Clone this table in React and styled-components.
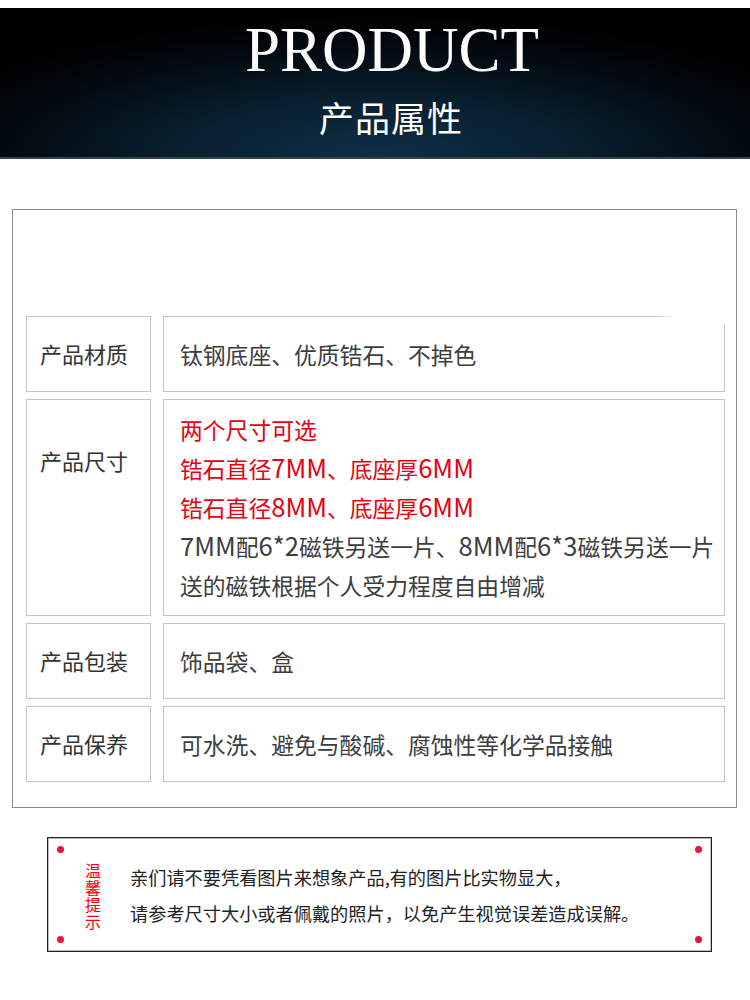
import React from 'react'
import styled, { createGlobalStyle } from 'styled-components';

const rows = [
    { label: '产品材质', lines: [{ text: '钛钢底座、优质锆石、不掉色' }], fade: true },
    {
        label: '产品尺寸',
        top: true,
        lines: [
            { text: '两个尺寸可选', red: true },
            { text: '锆石直径7MM、底座厚6MM', red: true },
            { text: '锆石直径8MM、底座厚6MM', red: true },
            { text: '7MM配6*2磁铁另送一片、8MM配6*3磁铁另送一片' },
            { text: '送的磁铁根据个人受力程度自由增减' },
        ]
    },
    { label: '产品包装', lines: [{ text: '饰品袋、盒' }] },
    { label: '产品保养', lines: [{ text: '可水洗、避免与酸碱、腐蚀性等化学品接触' }] },
];

// latin runs are set a little larger in the original font
const renderText = (text) =>
    text.split(/([A-Za-z0-9*]+)/).map((part, i) =>
        /^[A-Za-z0-9*]+$/.test(part) ? <Latin key={i}>{part}</Latin> : part
    );

function App() {
    return (
        <Page>
            <GlobalStyle />
            <Banner>
                <BannerTitle>PRODUCT</BannerTitle>
                <BannerSub>产品属性</BannerSub>
            </Banner>

            <SpecBox>
                {rows.map((row) => (
                    <SpecRow key={row.label}>
                        <LabelCell $top={row.top}>{row.label}</LabelCell>
                        <ValueCell $fade={row.fade}>
                            {row.lines.map((line) => (
                                <ValueLine key={line.text} $red={line.red}>{renderText(line.text)}</ValueLine>
                            ))}
                        </ValueCell>
                    </SpecRow>
                ))}
            </SpecBox>

            <TipBox>
                <Dot $x="left" $y="top" />
                <Dot $x="left" $y="bottom" />
                <Dot $x="right" $y="top" />
                <Dot $x="right" $y="bottom" />
                <TipTag>温馨提示</TipTag>
                <TipText>
                    <p>亲们请不要凭看图片来想象产品,有的图片比实物显大，</p>
                    <p>请参考尺寸大小或者佩戴的照片，以免产生视觉误差造成误解。</p>
                </TipText>
            </TipBox>
        </Page>
    )
}

const GlobalStyle = createGlobalStyle`
body{
    margin:0;
    background:#fff;
    font-family:"Noto Sans CJK SC", "Noto Sans", sans-serif;
}
`;

const Page = styled.div`
width:750px;
height:1000px;
padding-top:8px;
box-sizing:border-box;
overflow:hidden;
`;

const Banner = styled.div`
height:151px;
box-sizing:border-box;
display:flex;
flex-direction:column;
align-items:center;
background:radial-gradient(ellipse 65% 95% at 50% 100%, #0e2f47 0%, #08202f 40%, #030b12 75%, #000 100%);
border-bottom:2px solid #33434e;
`;

const BannerTitle = styled.div`
font-family:"Liberation Serif", serif;
font-size:63px;
line-height:1;
color:#fbfbfb;
margin-top:11px;
margin-left:34px;
`;

const BannerSub = styled.div`
font-size:35px;
line-height:1;
color:#fff;
margin-top:17px;
margin-left:32px;
letter-spacing:1px;
`;

const SpecBox = styled.div`
margin:50px 13px 0 12px;
height:599px;
box-sizing:border-box;
border:1px solid #8c8c8c;
padding:106px 11px 0 13px;
display:flex;
flex-direction:column;
gap:7px;
`;

const SpecRow = styled.div`
display:flex;
gap:12px;
`;

const LabelCell = styled.div`
width:125px;
box-sizing:border-box;
border:1px solid #c4c4c4;
padding:${p => p.$top ? '44px 0 0 13px' : '0 0 2px 13px'};
display:flex;
align-items:${p => p.$top ? 'flex-start' : 'center'};
min-height:76px;
font-size:22px;
color:#333;
`;

const ValueCell = styled.div`
position:relative;
flex:1;
box-sizing:border-box;
border:1px solid #c4c4c4;
min-height:76px;
padding:10px 0 10px 16px;
display:flex;
flex-direction:column;
justify-content:center;
&::after{
    content:'';
    display:${p => p.$fade ? 'block' : 'none'};
    position:absolute;
    top:-1px;
    right:-1px;
    width:70px;
    height:8px;
    background:linear-gradient(90deg, rgba(255,255,255,0), #fff 30%);
}
`;

const ValueLine = styled.div`
font-size:22.8px;
line-height:39px;
height:39px;
color:${p => p.$red ? '#e60012' : '#3d3d3d'};
`;

const Latin = styled.span`
font-size:25.6px;
line-height:0;
`;

const TipBox = styled.div`
position:relative;
margin:29px 38px 0 47px;
height:115px;
box-sizing:border-box;
border:1px solid #222;
box-shadow:inset 0 0 0 1px #bbb;
display:flex;
align-items:center;
`;

const Dot = styled.span`
position:absolute;
width:7px;
height:7px;
border-radius:50%;
background:#ee1040;
${p => p.$x === 'left' ? 'left:9px;' : 'right:9px;'}
${p => p.$y === 'top' ? 'top:8px;' : 'bottom:8px;'}
`;

const TipTag = styled.div`
width:16px;
margin-left:37px;
font-size:16px;
line-height:17px;
color:#f00;
word-break:break-all;
margin-top:2px;
`;

const TipText = styled.div`
margin-left:29px;
font-size:18.2px;
color:#222;
p{
    margin:0;
    line-height:36px;
}
`;

export default App
